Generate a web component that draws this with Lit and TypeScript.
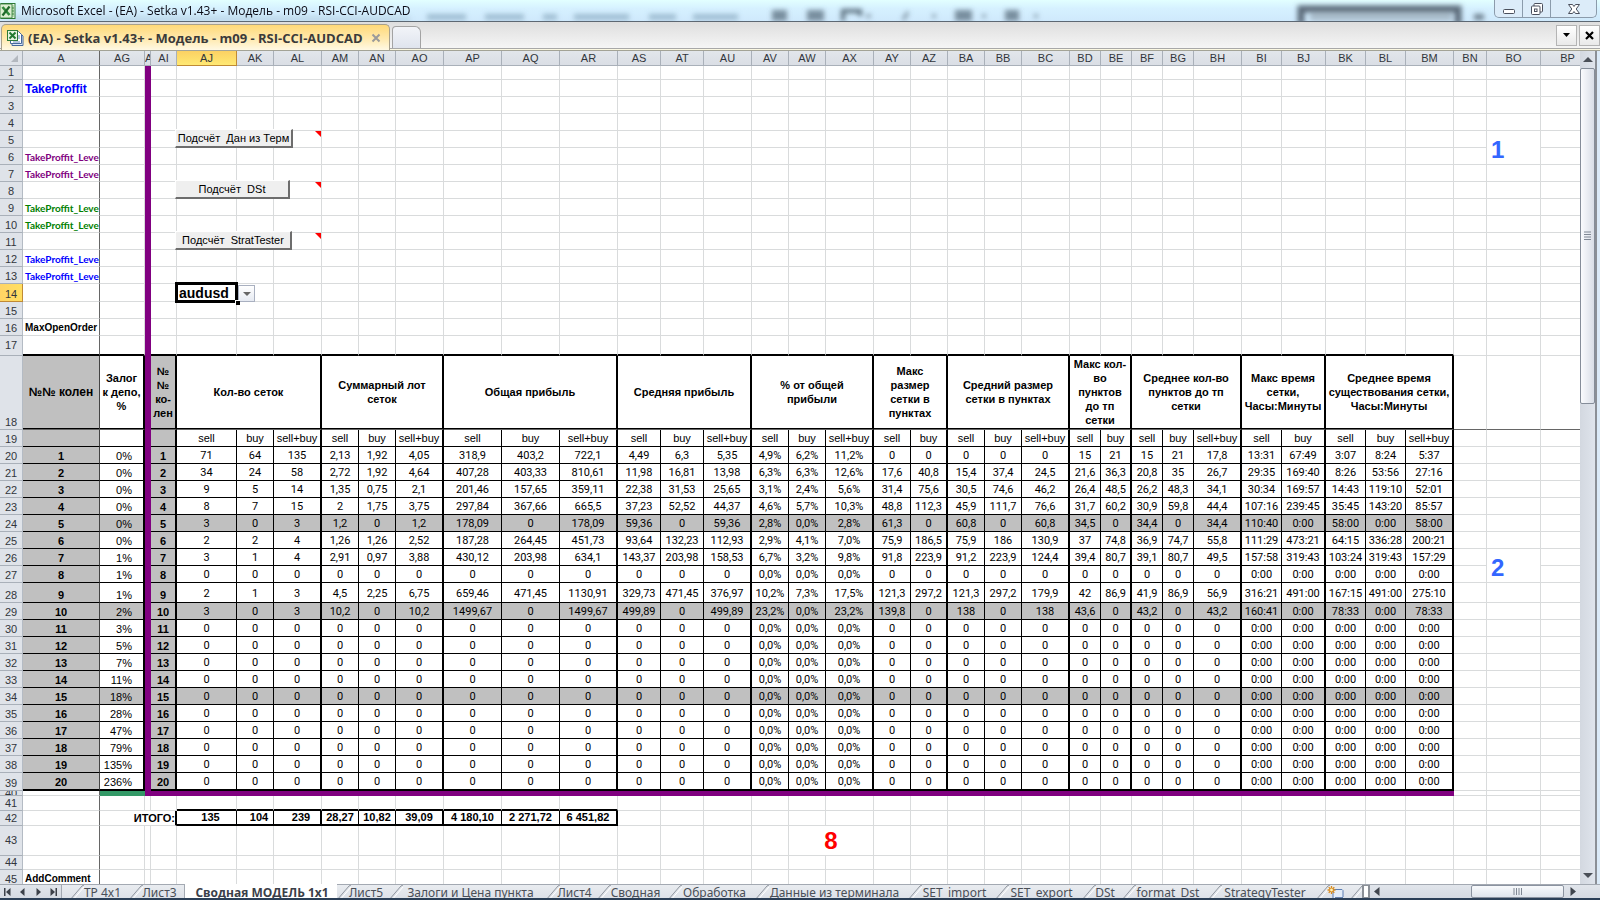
import { LitElement, html, css, svg, nothing } from "lit";
import { customElement } from "lit/decorators.js";
import { classMap } from "lit/directives/class-map.js";

type Col = { name: string; w: number };

const cols: Col[] = (
  "A:77 AG:45 AH:6 AI:26 AJ:60 AK:37 AL:48 AM:37 AN:37 AO:48 AP:58 AQ:58 AR:58 AS:43 AT:43 AU:48 " +
  "AV:37 AW:37 AX:48 AY:37 AZ:37 BA:37 BB:37 BC:48 BD:31 BE:31 BF:31 BG:31 BH:48 BI:40 BJ:44 " +
  "BK:40 BL:40 BM:48 BN:33 BO:54 BP:54"
)
  .split(" ")
  .map((s) => {
    const [name, w] = s.split(":");
    return { name, w: Number(w) };
  });

const groupEnds = new Set(["AG", "AI", "AL", "AO", "AR", "AU", "AX", "AZ", "BC", "BE", "BH", "BJ", "BM"]);
const firstData = cols.findIndex((c) => c.name === "AJ");
const lastData = cols.findIndex((c) => c.name === "BM");

const heights: Record<number, number> = { 1: 14, 14: 18, 17: 20, 18: 74, 28: 20, 39: 18, 40: 5, 41: 15, 42: 15, 43: 30, 44: 14 };

const groups: { span: number; lines: string[] }[] = [
  { span: 3, lines: ["Кол-во сеток"] },
  { span: 3, lines: ["Суммарный лот", "сеток"] },
  { span: 3, lines: ["Общая прибыль"] },
  { span: 3, lines: ["Средняя прибыль"] },
  { span: 3, lines: ["% от общей", "прибыли"] },
  { span: 2, lines: ["Макс", "размер", "сетки в", "пунктах"] },
  { span: 3, lines: ["Средний размер", "сетки в пунктах"] },
  { span: 2, lines: ["Макс кол-", "во", "пунктов", "до тп", "сетки"] },
  { span: 3, lines: ["Среднее кол-во", "пунктов до тп", "сетки"] },
  { span: 2, lines: ["Макс время", "сетки,", "Часы:Минуты"] },
  { span: 3, lines: ["Среднее время", "существования сетки,", "Часы:Минуты"] },
];

const subHeads = groups.flatMap((g) => (g.span === 3 ? ["sell", "buy", "sell+buy"] : ["sell", "buy"]));

const zeros =
  "0 0 0 0 0 0 0 0 0 0 0 0 0,0% 0,0% 0,0% 0 0 0 0 0 0 0 0 0 0 0:00 0:00 0:00 0:00 0:00";

const values: Record<number, string> = {
  20: "71 64 135 2,13 1,92 4,05 318,9 403,2 722,1 4,49 6,3 5,35 4,9% 6,2% 11,2% 0 0 0 0 0 15 21 15 21 17,8 13:31 67:49 3:07 8:24 5:37",
  21: "34 24 58 2,72 1,92 4,64 407,28 403,33 810,61 11,98 16,81 13,98 6,3% 6,3% 12,6% 17,6 40,8 15,4 37,4 24,5 21,6 36,3 20,8 35 26,7 29:35 169:40 8:26 53:56 27:16",
  22: "9 5 14 1,35 0,75 2,1 201,46 157,65 359,11 22,38 31,53 25,65 3,1% 2,4% 5,6% 31,4 75,6 30,5 74,6 46,2 26,4 48,5 26,2 48,3 34,1 30:34 169:57 14:43 119:10 52:01",
  23: "8 7 15 2 1,75 3,75 297,84 367,66 665,5 37,23 52,52 44,37 4,6% 5,7% 10,3% 48,8 112,3 45,9 111,7 76,6 31,7 60,2 30,9 59,8 44,4 107:16 239:45 35:45 143:20 85:57",
  24: "3 0 3 1,2 0 1,2 178,09 0 178,09 59,36 0 59,36 2,8% 0,0% 2,8% 61,3 0 60,8 0 60,8 34,5 0 34,4 0 34,4 110:40 0:00 58:00 0:00 58:00",
  25: "2 2 4 1,26 1,26 2,52 187,28 264,45 451,73 93,64 132,23 112,93 2,9% 4,1% 7,0% 75,9 186,5 75,9 186 130,9 37 74,8 36,9 74,7 55,8 111:29 473:21 64:15 336:28 200:21",
  26: "3 1 4 2,91 0,97 3,88 430,12 203,98 634,1 143,37 203,98 158,53 6,7% 3,2% 9,8% 91,8 223,9 91,2 223,9 124,4 39,4 80,7 39,1 80,7 49,5 157:58 319:43 103:24 319:43 157:29",
  28: "2 1 3 4,5 2,25 6,75 659,46 471,45 1130,91 329,73 471,45 376,97 10,2% 7,3% 17,5% 121,3 297,2 121,3 297,2 179,9 42 86,9 41,9 86,9 56,9 316:21 491:00 167:15 491:00 275:10",
  29: "3 0 3 10,2 0 10,2 1499,67 0 1499,67 499,89 0 499,89 23,2% 0,0% 23,2% 139,8 0 138 0 138 43,6 0 43,2 0 43,2 160:41 0:00 78:33 0:00 78:33",
};

const deposit = [0, 0, 0, 0, 0, 0, 1, 1, 1, 2, 3, 5, 7, 11, 18, 28, 47, 79, 135, 236];

const totals = ["135", "104", "239", "28,27", "10,82", "39,09", "4 180,10", "2 271,72", "6 451,82"];

const labels: Record<number, { text: string; cls: string }> = {
  2: { text: "TakeProffit", cls: "name blue wide" },
  6: { text: "TakeProffit_Leve", cls: "name violet level" },
  7: { text: "TakeProffit_Leve", cls: "name violet level" },
  9: { text: "TakeProffit_Leve", cls: "name green level" },
  10: { text: "TakeProffit_Leve", cls: "name green level" },
  12: { text: "TakeProffit_Leve", cls: "name blue level" },
  13: { text: "TakeProffit_Leve", cls: "name blue level" },
  16: { text: "MaxOpenOrder", cls: "name" },
  45: { text: "AddComment", cls: "name" },
};

const macros: Record<number, { text: string; w: number }> = {
  5: { text: "Подсчёт  Дан из Терм", w: 118 },
  8: { text: "Подсчёт  DSt", w: 115 },
  11: { text: "Подсчёт  StratTester", w: 117 },
};

const sheets: { text: string; w: number; active?: boolean }[] = [
  { text: "TP 4x1", w: 59 },
  { text: "Лист3", w: 55 },
  { text: "Сводная МОДЕЛЬ 1x1", w: 153, active: true },
  { text: "Лист5", w: 52 },
  { text: "Залоги и Цена пункта", w: 157 },
  { text: "Лист4", w: 51 },
  { text: "Сводная", w: 71 },
  { text: "Обработка", w: 87 },
  { text: "Данные из терминала", w: 153 },
  { text: "SET_import", w: 87 },
  { text: "SET_export", w: 87 },
  { text: "DSt", w: 40 },
  { text: "format_Dst", w: 86 },
  { text: "StrategyTester", w: 108 },
];

const stack = (lines: string[]) => lines.map((l, i) => html`${i ? html`<br />` : nothing}${l}`);

@customElement("excel-title")
class ExcelTitle extends LitElement {
  static styles = css`
    :host {
      display: block;
      font: 12px/20px "Open Sans", "Noto Sans", sans-serif;
    }
    .bar {
      position: relative;
      display: flex;
      align-items: center;
      height: 22px;
      overflow: hidden;
      background: linear-gradient(#e2ffff 0, #d6f1ff 40%, #cfe9fc 100%);
      border-bottom: 1px solid #5d6873;
      box-sizing: border-box;
    }
    .haze {
      position: absolute;
      inset: 0;
      width: 100%;
      height: 21px;
    }
    .logo {
      position: relative;
      width: 16px;
      height: 16px;
      flex: none;
    }
    .caption {
      position: relative;
      flex: 1;
      padding-left: 5px;
      color: #0a0a14;
      white-space: nowrap;
      overflow: hidden;
    }
    .controls {
      position: relative;
      display: flex;
      align-self: flex-start;
      height: 18px;
      margin-right: 3px;
      border: 1px solid #8b9bab;
      border-top: 0;
      border-radius: 0 0 5px 5px;
      background: #dcecf9;
      box-sizing: border-box;
      overflow: hidden;
    }
    .ctl {
      width: 27px;
      border: 0;
      border-right: 1px solid #8b9bab;
      background: none;
      padding: 0;
      display: grid;
      place-items: center;
      box-sizing: content-box;
    }
    .ctl.close {
      width: 45px;
      border-right: 0;
    }
  `;
  render() {
    const words = [
      [427, 39], [485, 39], [543, 14], [574, 55], [649, 27], [693, 45],
    ];
    const darks = [
      [772, 15], [807, 17], [955, 17], [1005, 14],
    ];
    return html`<header class="bar">
      <svg class="haze" viewBox="0 0 1600 21" preserveAspectRatio="none" aria-hidden="true">
        <defs><filter id="soft" x="-20%" y="-60%" width="140%" height="220%"><feGaussianBlur stdDeviation="2.5" /></filter></defs>
        <g filter="url(#soft)">
          <rect x="10" y="16" width="400" height="6" fill="#9db9cc" opacity=".35" />
          ${words.map(([x, w]) => svg`<rect x=${x} y="14" width=${w} height="6" fill="#7f9fb5" opacity=".6" />`)}
          ${darks.map(([x, w]) => svg`<rect x=${x} y="10" width=${w} height="11" fill="#5b6f7e" opacity=".75" />`)}
          <path d="M843 21V11H860V16" fill="none" stroke="#5b6f7e" stroke-width="4" />
          <path d="M866 16h5M903 20l5-8M932 16h4M982 16h4M1034 16h4" fill="none" stroke="#7b8f9e" stroke-width="3" />
          <path d="M1301 24V9H1458V24" fill="none" stroke="#5b6b79" stroke-width="7" />
          <rect x="1310" y="13" width="142" height="8" fill="#a9bccb" />
          <rect x="1474" y="14" width="10" height="6" fill="#6f8392" />
        </g>
      </svg>
      <svg class="logo" viewBox="0 0 16 16" aria-hidden="true">
        <rect x="1" y=".5" width="14" height="15" fill="#eef6ea" stroke="#2c7a36" />
        <path d="M11 2h3v12h-3z" fill="#b9dcb0" />
        <path d="M11 5h3M11 8h3M11 11h3" stroke="#2c7a36" stroke-width=".8" />
        <path d="M0 1h12v14H0z" fill="#dcefd2" stroke="#2c7a36" stroke-width=".8" />
        <path d="M2.500 4L9.500 12" stroke="#2f8a3b" stroke-width="2.600" />
        <path d="M9.500 3.500L2.500 12.500" stroke="#1f6a2b" stroke-width="2.200" />
      </svg>
      <div class="caption">Microsoft Excel - (EA) - Setka v1.43+ - Модель - m09 - RSI-CCI-AUDCAD</div>
      <div class="controls">
        <button class="ctl" aria-label="Свернуть">
          <svg width="14" height="14" viewBox="0 0 14 14"><rect x="1.500" y="7.500" width="11" height="4" rx="1" fill="#fff" stroke="#4a4f5c" /></svg>
        </button>
        <button class="ctl" aria-label="Восстановить">
          <svg width="14" height="14" viewBox="0 0 14 14">
            <rect x="4" y="1.500" width="8.500" height="8.500" rx="1" fill="#fff" stroke="#4a4f5c" />
            <rect x="1.500" y="4" width="8.500" height="8.500" rx="1" fill="#fff" stroke="#4a4f5c" />
            <rect x="4.500" y="7" width="2.500" height="2.500" fill="#fff" stroke="#4a4f5c" />
          </svg>
        </button>
        <button class="ctl close" aria-label="Закрыть">
          <svg width="14" height="14" viewBox="0 0 14 14">
            <path d="M1.500 2.500h4L7 4.500l1.500-2h4L9.200 7l3.300 4.500h-4L7 9.500l-1.500 2h-4L4.800 7z" fill="#fff" stroke="#4a4f5c" stroke-linejoin="round" />
          </svg>
        </button>
      </div>
    </header>`;
  }
}

@customElement("book-tabs")
class BookTabs extends LitElement {
  static styles = css`
    :host {
      display: block;
      font: bold 13px/24px "Open Sans", "Noto Sans", sans-serif;
    }
    .strip {
      display: flex;
      align-items: flex-end;
      height: 29px;
      padding-left: 1px;
      background: linear-gradient(#dedede, #f7f7f7);
      box-sizing: border-box;
      border-bottom: 1px solid #a3a396;
      box-shadow: inset 0 -1px #fbf8e2, inset 0 -2px #a8a8a8;
    }
    .book {
      display: flex;
      align-items: center;
      align-self: flex-end;
      width: 389px;
      height: 26px;
      padding: 0 7px 0 5px;
      box-sizing: border-box;
      border: 1px solid #a7a08c;
      border-bottom: 0;
      border-radius: 5px 5px 0 0;
      background: linear-gradient(#ffd978, #ffe9ae 55%, #fff9e4);
      color: #3a3a3a;
    }
    .book svg {
      flex: none;
    }
    .title {
      flex: 1;
      padding-left: 4px;
      white-space: nowrap;
      overflow: hidden;
    }
    .x {
      border: 0;
      padding: 0;
      width: 12px;
      height: 12px;
      background: none;
      display: grid;
    }
    .blank {
      width: 29px;
      height: 22px;
      margin: 0 0 2px 2px;
      padding: 0;
      border: 1px solid #a3a3a3;
      border-bottom: 0;
      border-radius: 4px 6px 0 0;
      background: linear-gradient(#f2f4f8, #dfe4ee);
    }
    .tools {
      display: flex;
      gap: 2px;
      margin-left: auto;
      align-self: flex-start;
      padding-top: 3px;
    }
    .tool {
      width: 21px;
      height: 21px;
      padding: 0;
      border: 1px solid #b4b4b4;
      background: linear-gradient(#fff, #e9e9e9);
      display: grid;
      place-items: center;
    }
  `;
  render() {
    return html`<nav class="strip">
      <div class="book">
        <svg width="17" height="16" viewBox="0 0 17 16" aria-hidden="true">
          <path d="M5 3h8l3 3v9.500H5z" fill="#dfe9f7" stroke="#47689c" />
          <path d="M3.500 1.500h8l3 3v9h-11z" fill="#fff" stroke="#47689c" />
          <path d="M11 6h2M11 8h2M6 12h7" stroke="#6d8cbb" />
          <rect x=".5" y=".5" width="10" height="10" fill="#e7f4e0" stroke="#2c7a36" />
          <path d="M2.500 2.500l6 6M8.500 2.500l-6 6" stroke="#237a30" stroke-width="2" />
        </svg>
        <span class="title">(EA) - Setka v1.43+ - Модель - m09 - RSI-CCI-AUDCAD</span>
        <button class="x" aria-label="Закрыть книгу">
          <svg width="12" height="12" viewBox="0 0 12 12"><path d="M2.500 2.500l7 7M9.500 2.500l-7 7" stroke="#9a9a9a" stroke-width="2" /></svg>
        </button>
      </div>
      <button class="blank" aria-label="Новая вкладка"></button>
      <div class="tools">
        <button class="tool" aria-label="Список книг">
          <svg width="9" height="5" viewBox="0 0 9 5"><path d="M1 0h7L4.500 4z" fill="#000" /></svg>
        </button>
        <button class="tool" aria-label="Закрыть">
          <svg width="9" height="9" viewBox="0 0 9 9"><path d="M1 1l7 7M8 1L1 8" stroke="#000" stroke-width="2.200" /></svg>
        </button>
      </div>
    </nav>`;
  }
}

@customElement("sheet-grid")
class SheetGrid extends LitElement {
  static styles = css`
    :host {
      display: block;
      overflow: hidden;
      background: #fff;
      font: 11px/13px "Liberation Sans", Arial, sans-serif;
      color: #000;
    }
    .sheet {
      table-layout: fixed;
      width: 100%;
      min-width: 1617px;
      border-collapse: separate;
      border-spacing: 0;
    }
    td,
    th {
      padding: 0;
      box-sizing: border-box;
      border: 0 solid #d9dbdc;
      border-width: 0 1px 1px 0;
      font-weight: normal;
      white-space: nowrap;
      vertical-align: bottom;
    }
    .corner,
    .letter,
    .number {
      border-color: #a9b0b9;
      background: #dfe3e9;
      color: #32363c;
      text-align: center;
    }
    .letter {
      vertical-align: middle;
      overflow: hidden;
      background: linear-gradient(#e2e6eb, #dadee5);
    }
    .letter.freeze {
      border-right-color: #666;
    }
    .letter.on {
      background: linear-gradient(#fcd163, #ffe974);
      border-color: #c08a35;
    }
    .number.on {
      background: linear-gradient(90deg, #ffd465, #ffdf62);
      border-color: #c08a35;
    }
    .number {
      border-right-color: #b4bbc4;
    }
    .number.mid {
      vertical-align: middle;
    }
    .tiny {
      height: 4px;
      line-height: 4px;
      overflow: hidden;
    }
    .corner {
      text-align: right;
      vertical-align: bottom;
    }
    .corner svg {
      display: block;
      margin: 0 4px 3px auto;
    }
    .freeze {
      border-right-color: #666;
    }
    .name {
      padding-left: 2px;
      overflow: hidden;
      text-align: left;
      font: bold 10px/14px "Liberation Sans", Arial, sans-serif;
    }
    .name.level {
      font-family: Lato, "Liberation Sans", sans-serif;
    }
    .name.wide {
      font-size: 12px;
    }
    .blue {
      color: #0000ff;
    }
    .violet {
      color: #800080;
    }
    .green {
      color: #008000;
    }
    .purple {
      background: #800080;
      border-color: #800080;
    }
    .jade {
      background: #339966;
      border-color: #339966;
    }
    .under {
      border-bottom: 2px solid #000;
    }
    .box {
      border-color: #000;
      text-align: center;
      vertical-align: middle;
    }
    .box.end {
      border-right-width: 2px;
    }
    .box.last {
      border-bottom-width: 2px;
    }
    .box.val {
      font: 11px/14px Roboto, "Noto Sans", sans-serif;
      padding-top: 2px;
    }
    .gray {
      background: #c0c0c0;
    }
    .box.index {
      font: bold 11px/14px "Liberation Sans", Arial, sans-serif;
      vertical-align: bottom;
    }
    .box.freeze {
      border-right-color: #444;
    }
    .box.pct {
      text-align: right;
      padding-right: 11px;
      vertical-align: bottom;
      line-height: 14px;
    }
    .box.head {
      font-weight: bold;
      line-height: 14px;
      padding-bottom: 2px;
    }
    .box.head.big {
      font-size: 12px;
    }
    .split {
      border-bottom-color: #666;
    }
    .box.split {
      border-bottom-color: #666;
      box-shadow: inset 0 -1px #000;
    }
    .sum {
      font-weight: bold;
      border-color: #000;
      border-bottom-width: 2px;
      text-align: center;
    }
    .sum.count {
      padding-left: 8px;
    }
    .sum.end {
      border-right-width: 2px;
    }
    .total {
      font-weight: bold;
      text-align: right;
      border-right: 2px solid #000;
    }
    .mark {
      font: bold 24px/28px "Liberation Sans", Arial, sans-serif;
      color: #3366ff;
      padding: 4px 0 0 4px;
      vertical-align: middle;
    }
    .mark.red {
      color: #ff0000;
      padding: 0;
      text-align: center;
    }
    .mark div {
      height: 28px;
    }
    .anchor {
      position: relative;
    }
    .macro {
      position: absolute;
      left: -2px;
      bottom: -1px;
      z-index: 1;
      height: 19px;
      padding: 0;
      white-space: pre;
      border: 1px solid #fff;
      border-right: 2px solid #6d6d6d;
      border-bottom: 2px solid #6d6d6d;
      background: #efefef;
      font: 11px/16px "Liberation Sans", Arial, sans-serif;
      color: #000;
    }
    .note::after {
      content: "";
      position: absolute;
      top: 0;
      right: 0;
      border-top: 6px solid #f00;
      border-left: 6px solid transparent;
    }
    .pair {
      position: absolute;
      left: -2px;
      top: -2px;
      z-index: 1;
      width: 63px;
      height: 21px;
      box-sizing: border-box;
      border: 3px solid #000;
      padding: 0 0 0 1px;
      appearance: none;
      background: #fff;
      color: #000;
      border-radius: 0;
      font: bold 14px/14px "Liberation Sans", Arial, sans-serif;
    }
    .drop {
      position: absolute;
      left: 61px;
      top: 1px;
      z-index: 1;
      width: 17px;
      height: 17px;
      box-sizing: border-box;
      border: 1px solid #a9b0c0;
      background: linear-gradient(#fff, #e6eaf2);
      display: grid;
      place-items: center;
      pointer-events: none;
    }
    .handle {
      position: absolute;
      left: 58px;
      top: 16px;
      z-index: 2;
      width: 5px;
      height: 5px;
      box-sizing: border-box;
      background: #000;
      border: 1px solid #fff;
      border-width: 1px 0 0 1px;
    }
  `;

  private isEnd = (i: number) => groupEnds.has(cols[i].name);

  private blank(row: number, from: number, to: number, extra = "") {
    const out = [];
    for (let i = from; i <= to; i++) {
      const name = cols[i].name;
      if (name === "BO" && (row === 6 || row === 27)) continue;
      if (name === "BO" && (row === 5 || row === 26)) {
        out.push(html`<td class="mark" rowspan="2"><div>${row === 5 ? 1 : 2}</div></td>`);
        continue;
      }
      const wall = name === "AH" && row <= 40;
      const under = row === 17 && i <= lastData && !wall;
      out.push(html`<td class="${wall ? "purple" : ""} ${name === "A" ? "freeze" : ""} ${under ? "under" : ""} ${extra}"></td>`);
    }
    return out;
  }

  private tail(row: number) {
    const extra = row === 18 ? "split" : "";
    return html`${this.blank(row, lastData + 1, cols.length - 1, extra)}<td class=${extra}></td>`;
  }

  private plain(row: number) {
    const label = labels[row];
    const first = label ? html`<td class="freeze ${label.cls}">${label.text}</td>` : this.blank(row, 0, 0);
    if (row === 42) return this.sumRow(first);
    if (row === 43) {
      const aw = cols.findIndex((c) => c.name === "AW");
      return html`${first}${this.blank(row, 1, aw - 1)}
        <td class="mark red" colspan="2"><div>8</div></td>
        ${this.blank(row, aw + 2, cols.length - 1)}<td></td>`;
    }
    const macro = macros[row];
    if (macro) {
      return html`${first}${this.blank(row, 1, firstData - 1)}
        <td class="anchor"><button class="macro" style="width:${macro.w}px">${macro.text}</button></td>
        <td></td>
        <td class="anchor note"></td>
        ${this.blank(row, firstData + 3, lastData)}${this.tail(row)}`;
    }
    if (row === 14) {
      return html`${first}${this.blank(row, 1, firstData - 1)}
        <td class="anchor">
          <select class="pair" aria-label="Валютная пара"><option>audusd</option></select>
          <span class="drop"><svg width="8" height="4" viewBox="0 0 8 4"><path d="M0 0h8L4 4z" fill="#666" /></svg></span>
          <span class="handle"></span>
        </td>
        ${this.blank(row, firstData + 1, lastData)}${this.tail(row)}`;
    }
    return html`${first}${this.blank(row, 1, lastData)}${this.tail(row)}`;
  }

  private sumRow(first: unknown) {
    return html`${first}
      <td class="total" colspan="3">ИТОГО:</td>
      ${totals.map(
        (t, i) => html`<td class=${classMap({ sum: true, count: i < 3, end: this.isEnd(firstData + i) })}>${t}</td>`
      )}
      ${this.blank(42, firstData + totals.length, cols.length - 1)}<td></td>`;
  }

  private headRow() {
    return html`
      <th class="box head big gray split freeze">№№ колен</th>
      <th class="box head split end">${stack(["Залог", "к депо,", "%"])}</th>
      <td class="purple"></td>
      <th class="box head gray split end">${stack(["№", "№", "ко-", "лен"])}</th>
      ${groups.map((g) => html`<th class="box head split end" colspan=${g.span}>${stack(g.lines)}</th>`)}
      ${this.tail(18)}`;
  }

  private dataRow(row: number) {
    const n = row - 19;
    const band = n > 0 && n % 5 === 0 && n < 20;
    const last = row === 39;
    const cells = n === 0 ? subHeads : (values[row] ?? zeros).split(" ");
    return html`
      <th class=${classMap({ box: true, index: true, gray: true, freeze: true, last })}>${n || ""}</th>
      <td class=${classMap({ box: true, pct: true, end: true, gray: band, last })}>${n ? `${deposit[n - 1]}%` : ""}</td>
      <td class="purple"></td>
      <th class=${classMap({ box: true, index: true, gray: true, end: true, last })}>${n || ""}</th>
      ${cells.map(
        (v, i) =>
          html`<td class=${classMap({ box: true, val: n > 0, gray: band, end: this.isEnd(firstData + i), last })}>${v}</td>`
      )}
      ${this.tail(row)}`;
  }

  private strip40() {
    return html`<td class="freeze"></td>
      <td class="jade"></td>
      ${cols.slice(2, lastData + 1).map(() => html`<td class="purple"></td>`)}
      ${this.tail(40)}`;
  }

  private topOfTotals() {
    return html`<td class="freeze"></td>
      ${this.blank(41, 1, firstData - 1)}
      ${totals.map(() => html`<td class="under"></td>`)}
      ${this.blank(41, firstData + totals.length, cols.length - 1)}<td></td>`;
  }

  private body(row: number) {
    if (row === 18) return this.headRow();
    if (row >= 19 && row <= 39) return this.dataRow(row);
    if (row === 40) return this.strip40();
    if (row === 41) return this.topOfTotals();
    return this.plain(row);
  }

  render() {
    const rows = Array.from({ length: 45 }, (_, i) => i + 1);
    return html`<table class="sheet">
      <colgroup>
        <col style="width:23px" />
        ${cols.map((c) => html`<col style="width:${c.w}px" />`)}
        <col />
      </colgroup>
      <thead>
        <tr style="height:15px">
          <td class="corner">
            <svg width="7" height="7" viewBox="0 0 7 7" aria-hidden="true"><path d="M7 0v7H0z" fill="#b3b8bf" /></svg>
          </td>
          ${cols.map(
            (c) =>
              html`<th scope="col" class=${classMap({ letter: true, on: c.name === "AJ", freeze: c.name === "A" })}>${c.name}</th>`
          )}
          <th class="letter"></th>
        </tr>
      </thead>
      <tbody>
        ${rows.map(
          (r) => html`<tr style="height:${heights[r] ?? 17}px">
            <th scope="row" class=${classMap({ number: true, on: r === 14, mid: r === 17 || r === 43 })}>
              ${r === 40 ? html`<div class="tiny">40</div>` : r}
            </th>
            ${this.body(r)}
          </tr>`
        )}
      </tbody>
    </table>`;
  }
}

@customElement("sheet-tabs")
class SheetTabs extends LitElement {
  static styles = css`
    :host {
      display: block;
      font: 12px/16px "Noto Sans", "Open Sans", sans-serif;
      color: #4a4f57;
    }
    .bar {
      display: flex;
      height: 16px;
      overflow: hidden;
      box-sizing: border-box;
      background: linear-gradient(#e2e6ec, #d5dae2);
      border-bottom: 2px solid #2b3f57;
    }
    .nav {
      display: flex;
      width: 62px;
      flex: none;
      justify-content: space-around;
      border-right: 1px solid #a3a9b2;
      border-top: 1px solid #a3a9b2;
      box-sizing: border-box;
    }
    .step {
      border: 0;
      padding: 0;
      background: none;
      width: 14px;
      display: grid;
      place-items: center;
    }
    .tabs {
      display: flex;
      flex: none;
      padding-left: 8px;
      border-top: 1px solid #a3a9b2;
      background: linear-gradient(#e9ecf0, #dde1e8);
    }
    .tab {
      position: relative;
      display: block;
      box-sizing: border-box;
      height: 15px;
      padding-left: 6px;
      text-align: center;
      white-space: nowrap;
      color: inherit;
      text-decoration: none;
      line-height: 15px;
    }
    .tab svg {
      position: absolute;
      left: 0;
      top: 0;
    }
    .tab.active {
      background: #fff;
      border-left: 1px solid #a3a9b2;
      margin-top: -1px;
      height: 16px;
      padding: 1px 0 0 2px;
      font: bold 12px/15px "Open Sans", "Noto Sans", sans-serif;
      color: #3b4048;
    }
    .add {
      width: 34px;
      border: 0;
      padding: 0;
      background: none;
      position: relative;
    }
    .add svg {
      position: absolute;
      left: 0;
      top: 0;
    }
    .lean {
      width: 12px;
    }
    .scroll {
      display: flex;
      flex: 1;
      align-items: stretch;
      border-top: 1px solid #a3a9b2;
    }
    .grip {
      width: 8px;
      box-sizing: border-box;
      border: 2px solid #8b9097;
      border-width: 1px 2px;
      background: #fff;
    }
    .track {
      flex: 1;
      display: flex;
      justify-content: flex-end;
    }
    .thumb {
      width: 93px;
      box-sizing: border-box;
      border: 1px solid #8b93a0;
      border-radius: 2px;
      background: linear-gradient(#f8fafc, #dfe4ec);
      display: grid;
      place-items: center;
    }
    .end {
      width: 18px;
    }
  `;
  render() {
    const slash = svg`<path d="M1 15L13 1" stroke="#fff" fill="none" transform="translate(1 1)" /><path d="M0 15L12 1L14 0" stroke="#8f959e" fill="none" />`;
    const step = (name: string, d: string) => html`<button class="step" aria-label=${name}>
      <svg width="9" height="8" viewBox="0 0 9 8"><path d=${d} fill="#3c4149" /></svg>
    </button>`;
    return html`<nav class="bar">
      <div class="nav">
        ${step("Первый лист", "M1 0h1.500v8H1zM7.500 0v8L3 4z")}
        ${step("Предыдущий лист", "M6.500 0v8L2 4z")}
        ${step("Следующий лист", "M2.500 0v8L7 4z")}
        ${step("Последний лист", "M6.500 0H8v8H6.500zM1.500 0v8L6 4z")}
      </div>
      <div class="tabs">
        ${sheets.map(
          (s) => html`<a href="#" class=${classMap({ tab: true, active: !!s.active })} style="width:${s.w}px">
            ${s.active ? nothing : html`<svg width="15" height="15" viewBox="0 0 15 15" aria-hidden="true">${slash}</svg>`}${s.text}
          </a>`
        )}
        <button class="add" aria-label="Вставить лист">
          <svg width="34" height="15" viewBox="0 0 34 15" aria-hidden="true">
            ${slash}
            <path d="M17 4.500h9l1 1v6.500l-2 2h-8z" fill="#e3ecf8" stroke="#5c7fb5" />
            <path d="M19 13h7" stroke="#3f5f95" stroke-width="1.500" />
            <path d="M15.500 1v8M11.500 5h8M12.700 2.200l5.600 5.600M18.300 2.200l-5.600 5.600" stroke="#d98a1c" stroke-width="1.300" />
            <circle cx="15.500" cy="5" r="1.400" fill="#fff3b8" />
          </svg>
        </button>
        <svg class="lean" width="12" height="15" viewBox="0 0 12 15" aria-hidden="true">${slash}</svg>
      </div>
      <div class="scroll">
        <div class="grip"></div>
        <button class="step" aria-label="Влево"><svg width="6" height="9" viewBox="0 0 6 9"><path d="M5.500 0v9L0 4.500z" fill="#40454d" /></svg></button>
        <div class="track">
          <div class="thumb"><svg width="9" height="7" viewBox="0 0 9 7"><path d="M1 0v7M3.500 0v7M6 0v7M8.500 0v7" stroke="#808894" /></svg></div>
        </div>
        <button class="step end" aria-label="Вправо"><svg width="6" height="9" viewBox="0 0 6 9"><path d="M.5 0v9L6 4.500z" fill="#40454d" /></svg></button>
        <div class="end"></div>
      </div>
    </nav>`;
  }
}

@customElement("app-root")
class AppRoot extends LitElement {
  static styles = css`
    :host {
      display: flex;
      flex-direction: column;
      height: 100vh;
      overflow: hidden;
      background: #dce3ec;
    }
    .work {
      flex: 1;
      min-height: 0;
      display: flex;
    }
    .grid {
      flex: 1;
      min-width: 0;
    }
    .rail {
      display: flex;
      flex-direction: column;
      width: 20px;
      padding-right: 4px;
      box-sizing: border-box;
      background: linear-gradient(90deg, #d3d8e0, #dfe4ec 15px, #8b8f96 15px, #8b8f96 17px, #dbeaf8 17px);
    }
    .arrow {
      height: 17px;
      width: 15px;
      border: 0;
      padding: 0;
      background: none;
      display: grid;
      place-items: center;
    }
    .track {
      flex: 1;
    }
    .thumb {
      width: 15px;
      height: 42%;
      box-sizing: border-box;
      border: 1px solid #858d99;
      border-radius: 2px;
      background: linear-gradient(90deg, #fafbfd, #d9dee7);
      display: grid;
      place-items: center;
    }
  `;
  render() {
    return html`
      <excel-title></excel-title>
      <book-tabs></book-tabs>
      <main class="work">
        <sheet-grid class="grid"></sheet-grid>
        <div class="rail">
          <button class="arrow" aria-label="Вверх"><svg width="10" height="5" viewBox="0 0 10 5"><path d="M0 5L5 0l5 5z" fill="#4a4f57" /></svg></button>
          <div class="track">
            <div class="thumb"><svg width="7" height="9" viewBox="0 0 7 9"><path d="M0 1h7M0 3.500h7M0 6h7M0 8.500h7" stroke="#808894" /></svg></div>
          </div>
          <button class="arrow" aria-label="Вниз"><svg width="10" height="5" viewBox="0 0 10 5"><path d="M0 0h10L5 5z" fill="#4a4f57" /></svg></button>
        </div>
      </main>
      <sheet-tabs></sheet-tabs>
    `;
  }
}
